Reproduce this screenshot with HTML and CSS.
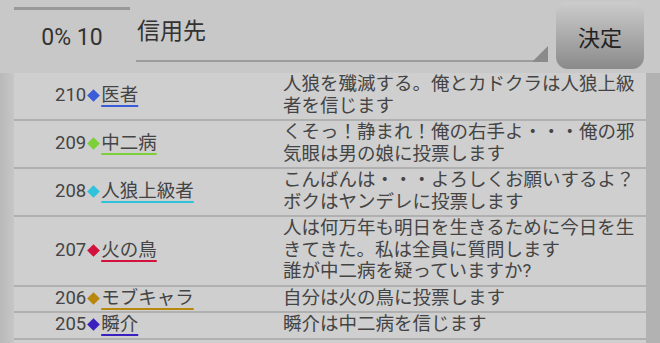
FILE: index.html
```html
<!DOCTYPE html>
<html lang="ja">
<head>
    <meta charset="UTF-8">
    <meta name="viewport" content="width=device-width, initial-scale=1.0">
    <title>投票</title>
    <link rel="stylesheet" href="styles.css">
</head>
<body>
    <div class="header">
        <div class="status">
            <div class="progress"></div>
            <div class="count">0% 10</div>
        </div>
        <div class="spinner">
            <span class="spinner-label">信用先</span>
            <span class="spinner-arrow"></span>
        </div>
        <button class="decide">決定</button>
    </div>

    <div class="content">
        <div class="log">
            <div class="row">
                <div class="who c-blue"><span class="num">210</span><span class="gem"></span><span class="name">医者</span></div>
                <div class="msg">人狼を殲滅する。俺とカドクラは人狼上級者を信じます</div>
            </div>
            <div class="row">
                <div class="who c-green"><span class="num">209</span><span class="gem"></span><span class="name">中二病</span></div>
                <div class="msg">くそっ！静まれ！俺の右手よ・・・俺の邪気眼は男の娘に投票します</div>
            </div>
            <div class="row">
                <div class="who c-cyan"><span class="num">208</span><span class="gem"></span><span class="name">人狼上級者</span></div>
                <div class="msg">こんばんは・・・よろしくお願いするよ？ボクはヤンデレに投票します</div>
            </div>
            <div class="row">
                <div class="who c-red"><span class="num">207</span><span class="gem"></span><span class="name">火の鳥</span></div>
                <div class="msg">人は何万年も明日を生きるために今日を生きてきた。私は全員に質問します<br>誰が中二病を疑っていますか?</div>
            </div>
            <div class="row">
                <div class="who c-gold"><span class="num">206</span><span class="gem"></span><span class="name">モブキャラ</span></div>
                <div class="msg">自分は火の鳥に投票します</div>
            </div>
            <div class="row">
                <div class="who c-indigo"><span class="num">205</span><span class="gem"></span><span class="name">瞬介</span></div>
                <div class="msg">瞬介は中二病を信じます</div>
            </div>
        </div>
        <div class="scroll"></div>
    </div>
</body>
</html>
```

FILE: styles.css
```css
* {
    margin: 0;
    padding: 0;
    box-sizing: border-box;
}

body {
    font-family: Roboto, "Noto Sans CJK JP", sans-serif;
    color: #444;
    background-color: #c8c8c8;
    width: 660px;
    height: 343px;
    overflow: hidden;
}

/* ヘッダー */
.header {
    display: flex;
    height: 73px;
    padding: 0 16px 0 14px;
}

.status {
    width: 116px;
    padding-top: 7px;
}

.progress {
    height: 3px;
    background-color: #999;
}

.count {
    margin-top: 13px;
    font-size: 23px;
    line-height: 30px;
    text-align: center;
    color: #333;
}

.spinner {
    position: relative;
    width: 412px;
    height: 62px;
    margin-left: 6px;
    padding: 17px 0 0 1px;
    border-bottom: 2px solid #9c9c9c;
}

.spinner-label {
    font-size: 23px;
    line-height: 30px;
    color: #333;
}

.spinner-arrow {
    position: absolute;
    right: 0;
    bottom: -2px;
    width: 16px;
    height: 16px;
    background-color: #8a8a8a;
    clip-path: polygon(100% 0, 100% 100%, 0 100%);
}

.decide {
    width: 88px;
    height: 67px;
    margin: 2px 0 0 8px;
    border: none;
    border-radius: 12px;
    background: linear-gradient(#cccccc, #8a8a8a);
    font-family: "Noto Sans CJK JP", sans-serif;
    font-size: 22px;
    color: #222;
}

/* ログ一覧 */
.content {
    display: flex;
    height: 270px;
    padding-left: 14px;
    background: linear-gradient(to right, #b9b9b9, #c6c6c6 14px);
}

.log {
    flex: 1;
    background-color: #cfcfcf;
}

.scroll {
    width: 14px;
    background-color: #b2b2b2;
}

.row {
    display: flex;
    padding: 1px 0 2px;
    border-bottom: 2px solid #b0b0b0;
    font-size: 18.5px;
    line-height: 21.5px;
}

.who {
    display: flex;
    align-items: center;
    width: 269px;
    padding-left: 41px;
}

.num {
    color: #444;
}

.gem {
    width: 9px;
    height: 9px;
    margin: 0 3px 0 3px;
    background-color: currentColor;
    transform: rotate(45deg);
}

.name {
    color: #444;
    text-decoration: underline;
    text-decoration-thickness: 2px;
    text-underline-offset: 4px;
    text-decoration-color: currentColor;
}

.c-blue { color: #3b5bd9; }
.c-green { color: #7cd13a; }
.c-cyan { color: #2fc2da; }
.c-red { color: #d2123d; }
.c-gold { color: #b8870d; }
.c-indigo { color: #3a20bf; }

.c-blue .name { text-decoration-color: #3b5bd9; }
.c-green .name { text-decoration-color: #7cd13a; }
.c-cyan .name { text-decoration-color: #2fc2da; }
.c-red .name { text-decoration-color: #d2123d; }
.c-gold .name { text-decoration-color: #b8870d; }
.c-indigo .name { text-decoration-color: #3a20bf; }

.msg {
    flex: 1;
    color: #444;
}
```
